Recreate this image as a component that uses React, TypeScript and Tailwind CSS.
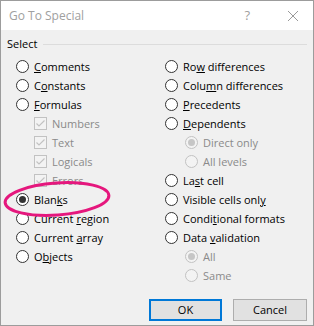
import React from 'react';
import clsx from 'clsx';

const FONT = "font-['Open_Sans','Noto_Sans',sans-serif]";

function Radio({ checked, disabled }: { checked?: boolean; disabled?: boolean }) {
  return (
    <span
      className={clsx(
        'w-[13px] h-[13px] rounded-full border flex items-center justify-center shrink-0',
        disabled ? 'border-[#c2c2c2] bg-[#f3f3f3]' : 'border-[#333333] bg-white'
      )}
    >
      {checked && (
        <span className={clsx('w-[7px] h-[7px] rounded-full', disabled ? 'bg-[#c6c6c6]' : 'bg-[#333333]')} />
      )}
    </span>
  );
}

function Check() {
  return (
    <span className="w-[13px] h-[13px] border border-[#c2c2c2] bg-[#f3f3f3] flex items-center justify-center shrink-0">
      <svg width="11" height="11" viewBox="0 0 11 11">
        <polyline points="1.5,5.5 4,8 9.5,2.5" fill="none" stroke="#c2c2c2" strokeWidth="1.2" />
      </svg>
    </span>
  );
}

type Item = {
  label: React.ReactNode;
  kind?: 'radio' | 'check';
  checked?: boolean;
  disabled?: boolean;
  indent?: boolean;
};

const left: Item[] = [
  { label: <><u>C</u>omments</> },
  { label: <>C<u>o</u>nstants</> },
  { label: <><u>F</u>ormulas</> },
  { label: 'Numbers', kind: 'check', disabled: true, indent: true },
  { label: 'Text', kind: 'check', disabled: true, indent: true },
  { label: 'Logicals', kind: 'check', disabled: true, indent: true },
  { label: 'Errors', kind: 'check', disabled: true, indent: true },
  { label: <>Blan<u>k</u>s</>, checked: true },
  { label: <>Current <u>r</u>egion</> },
  { label: <>Current <u>a</u>rray</> },
  { label: <>O<u>b</u>jects</> },
];

const right: Item[] = [
  { label: <>Ro<u>w</u> differences</> },
  { label: <>Colu<u>m</u>n differences</> },
  { label: <><u>P</u>recedents</> },
  { label: <><u>D</u>ependents</> },
  { label: 'Direct only', checked: true, disabled: true, indent: true },
  { label: 'All levels', disabled: true, indent: true },
  { label: <>La<u>s</u>t cell</> },
  { label: <>Visible cells onl<u>y</u></> },
  { label: <>Condi<u>t</u>ional formats</> },
  { label: <>Data <u>v</u>alidation</> },
  { label: 'All', checked: true, disabled: true, indent: true },
  { label: 'Same', disabled: true, indent: true },
];

function Row({ item, sub }: { item: Item; sub: string }) {
  return (
    <div className={clsx('h-[19px] flex items-center', item.indent && sub)}>
      {item.kind === 'check' ? <Check /> : <Radio checked={item.checked} disabled={item.disabled} />}
      <span
        className={clsx(
          'ml-[5px] leading-none whitespace-nowrap',
          item.disabled ? 'text-[#8a8a8a]' : 'text-black'
        )}
      >
        {item.label}
      </span>
    </div>
  );
}

export default function App() {
  return (
    <div className={clsx('relative w-[314px] h-[326px] border border-[#9c9c9c] flex flex-col text-[11px]', FONT)}>
      {/* Title bar */}
      <div className="h-[29px] bg-white flex items-center pl-[8px] pr-[15px]">
        <span className="text-[12px] text-[#a0a0a0]">Go To Special</span>
        <span className="ml-auto text-[13px] text-[#a0a0a0] mr-[38px]">?</span>
        <svg width="10" height="10" viewBox="0 0 10 10">
          <path d="M0 0L10 10M10 0L0 10" stroke="#9a9a9a" strokeWidth="1" />
        </svg>
      </div>

      {/* Body */}
      <div className="flex-1 bg-[#f0f0f0] flex flex-col pt-[6px] pb-[4px]">
        <div className="h-[16px] flex items-center pl-[6px] pr-[6px]">
          <span className="text-black">Select</span>
          <div className="flex-1 h-px bg-[#dcdcdc] ml-[6px]" />
        </div>

        <div className="mt-[5px] pl-[15px] grid grid-cols-[149px_1fr]">
          <div className="flex flex-col">
            {left.map((it, i) => (
              <Row key={i} item={it} sub="pl-[18px]" />
            ))}
          </div>
          <div className="flex flex-col">
            {right.map((it, i) => (
              <Row key={i} item={it} sub="pl-[20px]" />
            ))}
          </div>
        </div>

        <div className="mt-auto flex justify-end gap-[11px] pr-[6px]">
          <button className="w-[73px] h-[22px] border-2 border-[#0078d7] bg-[#e1e1e1] text-black">OK</button>
          <button className="w-[74px] h-[22px] border border-[#adadad] bg-[#e1e1e1] text-black">Cancel</button>
        </div>
      </div>

      {/* highlight around Blanks */}
      <svg className="absolute left-0 top-0 pointer-events-none" width="314" height="326" viewBox="0 0 314 326">
        <ellipse
          cx="56"
          cy="198"
          rx="52"
          ry="16"
          transform="rotate(-4 56 198)"
          fill="none"
          stroke="#e5177d"
          strokeWidth="3"
        />
      </svg>
    </div>
  );
}
